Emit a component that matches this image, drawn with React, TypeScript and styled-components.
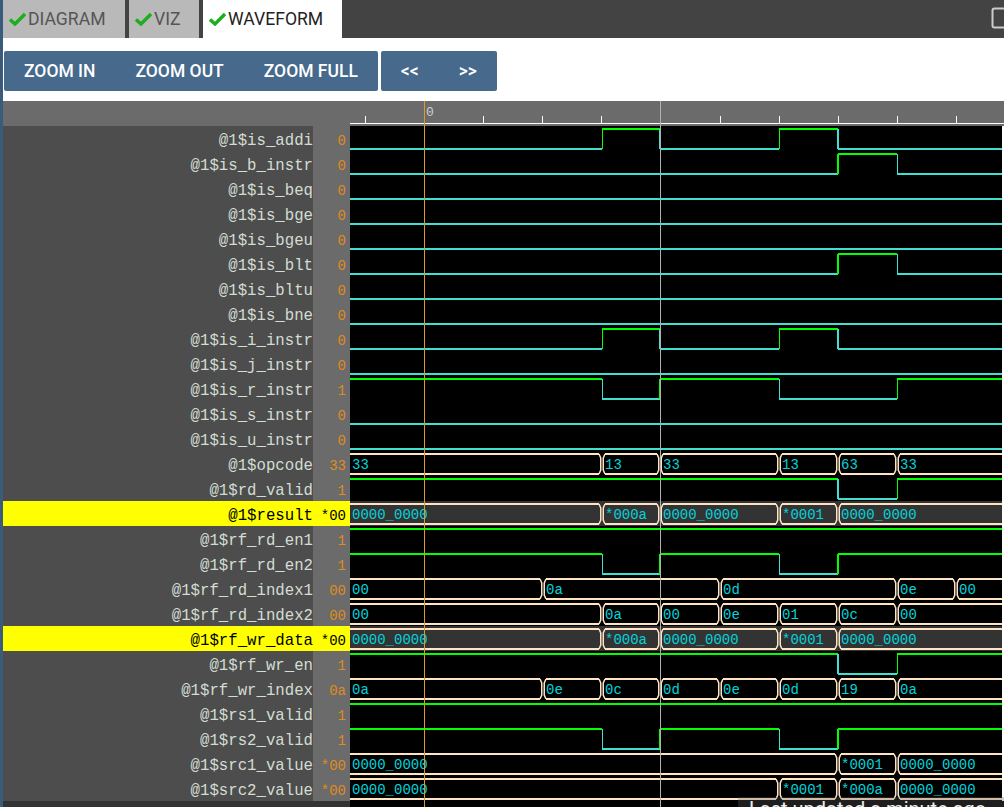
import React from 'react'
import styled, {createGlobalStyle} from 'styled-components'

type Seg = [number, string]
type Signal = {
    name: string
    value: string
    bit?: 0 | 1
    toggles?: number[]
    segs?: Seg[]
    hi?: boolean
}

const MONO = '"Liberation Mono", monospace'
const WAVE_LEFT = 350
const WAVE_WIDTH = 652

const resultSegs: Seg[] = [[351, '0000_0000'], [602, '*000a'], [660, '0000_0000'], [779, '*0001'], [838, '0000_0000']]

const signals: Signal[] = [
    {name: '@1$is_addi', value: '0', bit: 0, toggles: [602, 660, 779, 838]},
    {name: '@1$is_b_instr', value: '0', bit: 0, toggles: [838, 897]},
    {name: '@1$is_beq', value: '0', bit: 0},
    {name: '@1$is_bge', value: '0', bit: 0},
    {name: '@1$is_bgeu', value: '0', bit: 0},
    {name: '@1$is_blt', value: '0', bit: 0, toggles: [838, 897]},
    {name: '@1$is_bltu', value: '0', bit: 0},
    {name: '@1$is_bne', value: '0', bit: 0},
    {name: '@1$is_i_instr', value: '0', bit: 0, toggles: [602, 660, 779, 838]},
    {name: '@1$is_j_instr', value: '0', bit: 0},
    {name: '@1$is_r_instr', value: '1', bit: 1, toggles: [602, 660, 779, 897]},
    {name: '@1$is_s_instr', value: '0', bit: 0},
    {name: '@1$is_u_instr', value: '0', bit: 0},
    {name: '@1$opcode', value: '33', segs: [[351, '33'], [602, '13'], [660, '33'], [779, '13'], [838, '63'], [897, '33']]},
    {name: '@1$rd_valid', value: '1', bit: 1, toggles: [838, 897]},
    {name: '@1$result', value: '*00', segs: resultSegs, hi: true},
    {name: '@1$rf_rd_en1', value: '1', bit: 1},
    {name: '@1$rf_rd_en2', value: '1', bit: 1, toggles: [602, 660, 779, 838]},
    {name: '@1$rf_rd_index1', value: '00', segs: [[351, '00'], [543, '0a'], [720, '0d'], [897, '0e'], [956, '00']]},
    {name: '@1$rf_rd_index2', value: '00', segs: [[351, '00'], [602, '0a'], [660, '00'], [720, '0e'], [779, '01'], [838, '0c'], [897, '00']]},
    {name: '@1$rf_wr_data', value: '*00', segs: resultSegs, hi: true},
    {name: '@1$rf_wr_en', value: '1', bit: 1, toggles: [838, 897]},
    {name: '@1$rf_wr_index', value: '0a', segs: [[351, '0a'], [543, '0e'], [602, '0c'], [660, '0d'], [720, '0e'], [779, '0d'], [838, '19'], [897, '0a']]},
    {name: '@1$rs1_valid', value: '1', bit: 1},
    {name: '@1$rs2_valid', value: '1', bit: 1, toggles: [602, 660, 779, 838]},
    {name: '@1$src1_value', value: '*00', segs: [[351, '0000_0000'], [838, '*0001'], [897, '0000_0000']]},
    {name: '@1$src2_value', value: '*00', segs: [[351, '0000_0000'], [779, '*0001'], [838, '*000a'], [897, '0000_0000']]},
]

const ticks = [365, 424, 483, 542, 601, 660, 720, 779, 838, 897, 956]
// these edges land across two pixels in the reference, the others on one
const thickEdges = [660, 838]

const GlobalStyle = createGlobalStyle`
  html, body {
    margin: 0;
    padding: 0;
    background: #000;
  }
`

const Page = styled.div`
  position: relative;
  width: 1004px;
  height: 807px;
  overflow: hidden;
  box-sizing: border-box;
  border-left: 3px solid #3b5b7c;
  background: #fff;
  font-family: Roboto, sans-serif;
`

const TabBar = styled.div`
  display: flex;
  gap: 4px;
  align-items: stretch;
  height: 38px;
  background: #434343;
`

const Tab = styled.div<{ $active?: boolean, $width: number }>`
  display: flex;
  align-items: center;
  gap: 2px;
  box-sizing: border-box;
  width: ${props => props.$width}px;
  padding-left: 6px;
  font-size: 17.6px;
  color: ${props => props.$active ? '#222' : '#555'};
  background: ${props => props.$active ? '#fff' : '#b9b9b9'};
`

const WindowIcon = styled.svg`
  margin-left: auto;
  align-self: flex-start;
  margin-top: 6px;
`

const Toolbar = styled.div`
  display: flex;
  gap: 3px;
  height: 63px;
  box-sizing: border-box;
  padding: 13px 0 10px 1px;
`

const ButtonGroup = styled.div`
  display: flex;
  border-radius: 2px;
  background: #46698c;
`

const ToolButton = styled.div`
  padding: 0 20px;
  line-height: 40px;
  font-size: 17.5px;
  font-weight: 500;
  color: #fff;
  white-space: nowrap;
`

const WavePane = styled.div`
  position: relative;
`

const Ruler = styled.div`
  display: flex;
  justify-content: flex-end;
  height: 25px;
  background: #6b6b6b;
`

const Row = styled.div`
  display: flex;
  height: 25px;
  background: #fff;
`

const SignalName = styled.div<{ $hi?: boolean }>`
  width: 310px;
  text-align: right;
  font: 15.7px/31px ${MONO};
  white-space: pre;
  color: ${props => props.$hi ? '#000' : '#d3ddd3'};
  background: ${props => props.$hi ? '#ffff00' : '#4d4d4d'};
`

const SignalValue = styled.div<{ $hi?: boolean }>`
  box-sizing: border-box;
  width: 37px;
  padding-right: 4px;
  text-align: right;
  font: 14px/30px ${MONO};
  color: ${props => props.$hi ? '#000' : '#e08a1e'};
  background: ${props => props.$hi ? '#ffff00' : '#6b6b6b'};
`

const WaveBox = styled.svg<{ $hi?: boolean }>`
  display: block;
  background: ${props => props.$hi ? '#333' : '#000'};
`

const BusLabel = styled.text`
  font: 14px ${MONO};
  fill: #00d4dc;
`

const RulerLabel = styled.text`
  font: 13px ${MONO};
  fill: #d0d0d0;
`

const Footer = styled.div`
  display: flex;
  height: 6px;
  background: #000;
`

const FooterLeft = styled.div`
  width: 347px;
  background: #333;
`

const Cursor = styled.div<{ $x: number, $color: string }>`
  position: absolute;
  top: 0;
  bottom: 0;
  left: ${props => props.$x - 3}px;
  width: 1px;
  background: ${props => props.$color};
`

const Toast = styled.div`
  position: absolute;
  left: 735px;
  right: 0;
  top: 797px;
  height: 40px;
  padding-left: 11px;
  font-size: 20px;
  color: #eee;
  background: rgba(100, 100, 100, 0.3);
`

const CheckMark = () => (
    <svg width="17" height="14" viewBox="0 0 17 14">
        <path d="M1 7.5 L6 12 L16 2" fill="none" stroke="#1cae1c" strokeWidth="3.4"/>
    </svg>
)

const BitWave = ({bit, toggles = []}: { bit: 0 | 1, toggles?: number[] }) => {
    const edges = [WAVE_LEFT, ...toggles, WAVE_LEFT + WAVE_WIDTH]
    const y = (level: number) => level ? 3 : 23
    return <>
        {edges.slice(0, -1).map((edge, i) => {
            const level = (bit + i) % 2
            const x = edge - WAVE_LEFT
            const thick = thickEdges.includes(edge)
            const color = level ? '#00ff00' : '#40e0d0'
            return <g key={edge} fill="none" stroke={color}>
                <path d={`M${x} ${y(level)}H${edges[i + 1] - WAVE_LEFT}`} strokeWidth="2"/>
                {i > 0 && <path d={`M${thick ? x : x + 0.5} ${y(1 - level)}V${y(level)}`} strokeWidth={thick ? 2 : 1}/>}
            </g>
        })}
    </>
}

const BusWave = ({segs}: { segs: Seg[] }) => <>
    {segs.map(([start, label], i) => {
        const x0 = start - WAVE_LEFT
        const x1 = i + 1 < segs.length ? segs[i + 1][0] - WAVE_LEFT : WAVE_WIDTH + 4
        const open = i === 0
        const right = `M${open ? 0 : x0 + 3} 3H${x1 - 3}M${open ? 0 : x0 + 3} 23H${x1 - 3}`
        const edges = `M${x1 - 3} 3L${x1 - 1.25} 7V19L${x1 - 3} 23` +
            (open ? '' : `M${x0 + 3} 3L${x0 + 1.25} 7V19L${x0 + 3} 23`)
        return <g key={start} fill="none" stroke="#ffe4c4">
            <path d={right} strokeWidth="2"/>
            <path d={edges} strokeWidth="1.5"/>
            <BusLabel x={open ? 2 : x0 + 3} y="18" stroke="none">{label}</BusLabel>
        </g>
    })}
</>

export default function App() {
    return (
        <Page>
            <GlobalStyle/>
            <TabBar>
                <Tab $width={122}><CheckMark/>DIAGRAM</Tab>
                <Tab $width={70}><CheckMark/>VIZ</Tab>
                <Tab $width={139} $active><CheckMark/>WAVEFORM</Tab>
                <WindowIcon width="13" height="24" viewBox="0 0 13 24">
                    <rect x="1.5" y="2.5" width="16" height="19" rx="2" fill="none" stroke="#ccc" strokeWidth="2"/>
                </WindowIcon>
            </TabBar>
            <Toolbar>
                <ButtonGroup>
                    <ToolButton>ZOOM IN</ToolButton>
                    <ToolButton>ZOOM OUT</ToolButton>
                    <ToolButton>ZOOM FULL</ToolButton>
                </ButtonGroup>
                <ButtonGroup>
                    <ToolButton>&lt;&lt;</ToolButton>
                    <ToolButton>&gt;&gt;</ToolButton>
                </ButtonGroup>
            </Toolbar>
            <WavePane>
                <Ruler>
                    <svg width="654" height="25" viewBox="0 0 654 25">
                        <path d="M0 22.5H654" stroke="#fff" strokeWidth="1"/>
                        {ticks.map(x => (
                            <path key={x} d={`M${x - WAVE_LEFT + 0.5} 15V22`} stroke="#fff" strokeWidth="1"/>
                        ))}
                        <RulerLabel x="76" y="15">0</RulerLabel>
                    </svg>
                </Ruler>
                {signals.map(s => (
                    <Row key={s.name}>
                        <SignalName $hi={s.hi}>{s.name}</SignalName>
                        <SignalValue $hi={s.hi}>{s.value}</SignalValue>
                        <WaveBox $hi={s.hi} width={WAVE_WIDTH} height="25" viewBox={`0 0 ${WAVE_WIDTH} 25`}>
                            {s.segs
                                ? <BusWave segs={s.segs}/>
                                : <BitWave bit={s.bit ?? 0} toggles={s.toggles}/>}
                        </WaveBox>
                    </Row>
                ))}
                <Footer><FooterLeft/></Footer>
                <Cursor $x={424} $color="#dd9a2a"/>
                <Cursor $x={660} $color="#b0b0b0"/>
            </WavePane>
            <Toast>Last updated a minute ago</Toast>
        </Page>
    )
}
